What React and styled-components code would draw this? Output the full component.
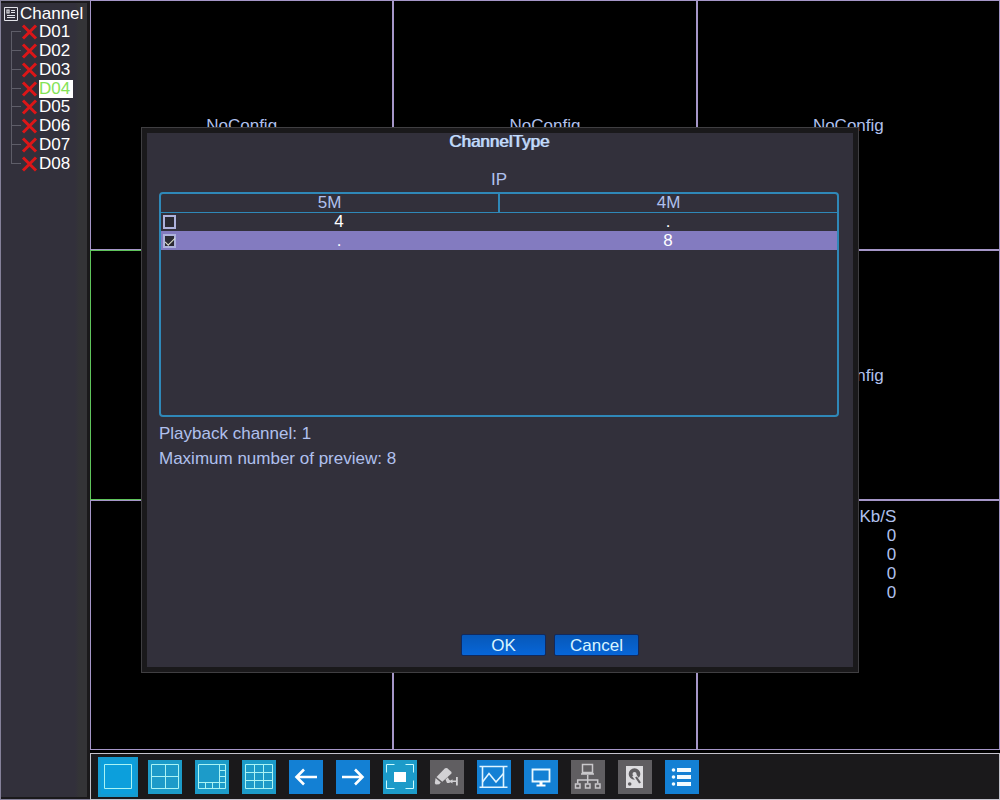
import { useState } from 'react';
import styled, { createGlobalStyle } from 'styled-components';

const GlobalStyle = createGlobalStyle`
  * {
    box-sizing: border-box;
  }

  :root {
    --panel: #32303b;
    --dark: #1a191b;
    --line: #a596c8;
    --text: #b0c0ee;
    --accent: #2f88b8;
  }

  body {
    margin: 0;
    background: #000;
    color: var(--text);
    font-family: 'Liberation Sans', Arial, sans-serif;
    font-size: 17px;
    line-height: 19px;
  }

  button {
    font: inherit;
  }
`;

const Screen = styled.div`
  display: grid;
  grid-template-columns: 90px 1fr;
  height: 100vh;
`;

const Sidebar = styled.aside`
  padding-bottom: 2px;
  border: 1px solid #85819a;
  border-right: 0;
  background: var(--dark);
`;

const SidebarBody = styled.div`
  height: 100%;
  margin-right: 3px;
  padding: 1px 3px;
  border-top: 2px solid var(--dark);
  background: linear-gradient(to right, var(--panel) 74px, #343437 78px);
`;

const SidebarTitle = styled.h1`
  display: flex;
  align-items: center;
  gap: 2px;
  margin: 0;
  color: #fff;
  font-size: 17px;
  font-weight: normal;
`;

const ChannelList = styled.ul`
  display: grid;
  grid-auto-rows: 1fr;
  height: 150px;
  margin: 0;
  padding: 0 0 0 7px;
  list-style: none;
`;

const ChannelItem = styled.li`
  display: flex;
  align-items: center;
`;

const Branch = styled.span`
  display: grid;
  grid-template-rows: 1fr 1fr;
  align-self: stretch;
  width: 10px;

  &::before {
    content: '';
    border-left: ${({ $first }) => ($first ? '0' : '1px solid #5e5d68')};
    border-bottom: 1px solid #5e5d68;
  }

  &::after {
    content: '';
    border-left: ${({ $last }) => ($last ? '0' : '1px solid #5e5d68')};
  }
`;

const ChannelButton = styled.button`
  display: flex;
  align-items: center;
  padding: 0;
  border: 0;
  background: none;
  color: ${({ $selected }) => ($selected ? '#84e356' : '#fff')};
  cursor: pointer;
`;

const ChannelName = styled.span`
  padding-right: 3px;
  background: ${({ $selected }) => ($selected ? '#fff' : 'none')};
  line-height: 18px;
`;

const Main = styled.main`
  display: flex;
  flex-direction: column;
  min-width: 0;
`;

const VideoGrid = styled.div`
  flex: 1;
  display: grid;
  grid-template-columns: repeat(3, 1fr);
  grid-template-rows: repeat(3, 1fr);
`;

const VideoCell = styled.div`
  display: flex;
  align-items: ${({ $top }) => ($top ? 'flex-start' : 'center')};
  justify-content: center;
  border: 1px solid ${({ $selected }) => ($selected ? '#5fc45c' : 'var(--line)')};
`;

const BitrateTable = styled.table`
  width: 96px;
  margin-top: 6px;
  border-collapse: collapse;
  text-align: right;

  th,
  td {
    padding: 0;
    font-weight: normal;
  }
`;

const Toolbar = styled.nav`
  display: flex;
  align-items: center;
  gap: 13px;
  height: 47px;
  margin-top: 3px;
  padding: 0 10px;
  border: 1px solid #c4c2cc;
  background: var(--dark);
`;

const toolColors = {
  cyan: '#1c9bc9',
  blue: '#1380d4',
  gray: '#605e61',
};

const ToolButton = styled.button`
  flex: none;
  display: grid;
  width: 34px;
  height: 34px;
  padding: 0;
  border: 0;
  background: ${({ $tone, $active }) => ($active ? '#0c9fdc' : toolColors[$tone])};
  box-shadow: ${({ $active }) => ($active ? '0 0 0 3px #159bd0' : 'none')};
  cursor: pointer;
`;

const Dialog = styled.section`
  position: fixed;
  inset: 127px 141px;
  display: flex;
  border: 1px solid #403f42;
  background: var(--dark);
  padding: 5px;
`;

const DialogBody = styled.div`
  flex: 1;
  display: flex;
  flex-direction: column;
  padding: 0 14px 11px 12px;
  background: var(--panel);
`;

const DialogTitle = styled.h2`
  margin: 0 0 20px;
  color: #c4dcfa;
  font-size: 17px;
  font-weight: normal;
  line-height: 17px;
  text-align: center;
  text-shadow: 1px 0 #a9c4ec;
`;

const GroupTitle = styled.h3`
  margin: 0 0 3px;
  font-size: 17px;
  font-weight: normal;
  text-align: center;
`;

const TableFrame = styled.div`
  height: 225px;
  margin-bottom: 7px;
  border: 2px solid var(--accent);
  border-radius: 4px;
`;

const TypeTable = styled.table`
  width: 100%;
  border-collapse: collapse;
  table-layout: fixed;
  text-align: center;

  th {
    height: 18px;
    padding: 0;
    border-bottom: 1px solid var(--accent);
    font-weight: normal;
    line-height: 17px;
  }

  th + th {
    border-left: 2px solid var(--accent);
  }

  td {
    height: 19px;
    padding: 0;
    line-height: 17px;
  }
`;

const CheckCol = styled.col`
  width: 18px;
`;

const HalfCol = styled.col`
  width: 50%;
`;

const TypeRow = styled.tr`
  background: ${({ $selected }) => ($selected ? '#837bc0' : 'none')};
  color: #fff;
`;

const CheckBox = styled.input`
  appearance: none;
  display: grid;
  width: 13px;
  height: 14px;
  margin: 0 0 0 2px;
  border: 2px solid #aeb2dc;
  background: #2b2a33;

  &:checked::before {
    content: '';
    width: 9px;
    height: 4px;
    border: solid #dfe3d0;
    border-width: 0 0 1px 1px;
    transform: translate(0, 2px) rotate(-45deg);
  }
`;

const Info = styled.p`
  margin: 0 0 6px;
`;

const Actions = styled.div`
  display: flex;
  justify-content: center;
  gap: 8px;
  margin-top: auto;
  padding-left: 102px;
`;

const ActionButton = styled.button`
  width: 85px;
  height: 22px;
  padding: 0;
  border: 1px solid #12295c;
  border-radius: 2px;
  background: linear-gradient(#0758b8, #0766d8);
  color: #d8f4ff;
  line-height: 19px;
  cursor: pointer;
`;

const ListIcon = () => (
  <svg width="14" height="14" viewBox="0 0 14 14" fill="none" stroke="#e4e4ea" aria-hidden="true">
    <path d="M.5 .5h13v13H.5z" />
    <path d="M3 3h2v3H3zM7 3.5h4M7 5.5h4M3 8.500h8M3 10.500h8" strokeWidth="1.2" />
  </svg>
);

const CrossIcon = () => (
  <svg width="18" height="16" viewBox="0 0 18 16" stroke="#dc1618" strokeWidth="3" aria-hidden="true">
    <path d="M2 1.5L15 14.5M15 1.5L2 14.5" />
  </svg>
);

const ToolIcon = ({ children }) => (
  <svg width="34" height="34" viewBox="0 0 34 34" fill="none" stroke="#a9f3f4" aria-hidden="true">
    {children}
  </svg>
);

const tools = [
  {
    name: 'Single view',
    tone: 'cyan',
    icon: <path d="M3.5 4.5h27v24h-27z" />,
  },
  {
    name: 'Four views',
    tone: 'cyan',
    icon: <path d="M3.5 4.5h27v24h-27zM17.5 4.5v24M3.5 16.5h27" />,
  },
  {
    name: 'Eight views',
    tone: 'cyan',
    icon: <path d="M3.5 4.5h27v24h-27zM24.5 4.5v24M3.5 22.5h27M24.5 10.5h6M24.5 16.5h6M10.5 22.5v6M17.5 22.5v6" />,
  },
  {
    name: 'Nine views',
    tone: 'cyan',
    icon: <path d="M3.5 4.5h27v24h-27zM12.5 4.5v24M21.5 4.5v24M3.5 12.5h27M3.5 20.5h27" />,
  },
  {
    name: 'Previous',
    tone: 'blue',
    icon: <path d="M28 17H8M15 9.5L7.5 17l7.5 7.5" stroke="#fff" strokeWidth="2.6" />,
  },
  {
    name: 'Next',
    tone: 'blue',
    icon: <path d="M6 17h20M19 9.5l7.5 7.5-7.5 7.5" stroke="#fff" strokeWidth="2.6" />,
  },
  {
    name: 'Full screen',
    tone: 'cyan',
    icon: (
      <>
        <path d="M3.5 12.5v-8h8M22.5 4.5h8v8M30.5 20.5v8h-8M11.5 28.5h-8v-8" stroke="#c9fbff" />
        <path d="M11 12h12v10H11z" fill="#fff" stroke="none" />
      </>
    ),
  },
  {
    name: 'PTZ',
    tone: 'gray',
    icon: (
      <g fill="#d2d1d4" stroke="none">
        <path d="M6.5 17L15 8.2l2-.2 4.5 4v1.500L12.300 21.800z" />
        <path d="M5.600 18l5.200 4.600-1.600 1.600-3.400.2-1-1.200z" />
        <path d="M15.500 19.500l2.300-2.300 1.400 2.500 1.300.8 2-1.300v4.300l-2-1.200-1.500.8h-2z" />
        <path d="M22 20.500h4V17h1.800v8.500H26V22h-4z" />
      </g>
    ),
  },
  {
    name: 'Color',
    tone: 'blue',
    icon: (
      <>
        <path d="M2.5 6.5h28M2.5 27.3h28M5.5 7v20M26.5 7v20" stroke="#dff4ff" strokeWidth="1.6" />
        <path d="M5.5 22l6.500-8.500 7 8.500 7.500-8.500" stroke="#dff4ff" strokeWidth="1.600" />
      </>
    ),
  },
  {
    name: 'Output',
    tone: 'blue',
    icon: (
      <>
        <path d="M8.5 9.5h17v12h-17z" stroke="#e8f8ff" strokeWidth="1.8" />
        <path d="M15.500 22h3v2.500h3v2h-9v-2h3z" fill="#fff" stroke="none" />
      </>
    ),
  },
  {
    name: 'Network',
    tone: 'gray',
    icon: (
      <g stroke="#c9c8cb" strokeWidth="1.5">
        <path d="M11.5 4.5h10v8h-10zM10 14h13M16.700 15v8.500M6.700 23.500v-3.500h20v3.500" />
        <path d="M4.500 24h4.500v4H4.500zM14.500 24H19v4h-4.500zM24.500 24H29v4h-4.500z" />
      </g>
    ),
  },
  {
    name: 'Disk manager',
    tone: 'gray',
    icon: (
      <>
        <path d="M8 6h17v22H8z" fill="#dddcdf" stroke="none" />
        <circle cx="16.500" cy="14" r="5.800" fill="#605e61" stroke="none" />
        <circle cx="16.500" cy="14" r="2" fill="#dddcdf" stroke="none" />
        <path d="M16 15l6.500 9" stroke="#dddcdf" strokeWidth="4.500" />
        <path d="M18 17l4 6" stroke="#605e61" strokeWidth="2.200" />
        <circle cx="11.700" cy="24" r="1.800" fill="#605e61" stroke="none" />
      </>
    ),
  },
  {
    name: 'Main menu',
    tone: 'blue',
    icon: (
      <g fill="#f2fbff" stroke="none">
        <path d="M12 8h14v4H12zM12 15h14v4H12zM12 22h14v4H12z" />
        <circle cx="8.5" cy="10" r="1.8" />
        <circle cx="8.5" cy="17" r="1.8" />
        <circle cx="8.5" cy="24" r="1.8" />
      </g>
    ),
  },
];

const channels = ['D01', 'D02', 'D03', 'D04', 'D05', 'D06', 'D07', 'D08'];

const channelTypes = [
  { fiveM: '4', fourM: '.' },
  { fiveM: '.', fourM: '8' },
];

const ChannelTree = ({ selected, onSelect }) => (
  <Sidebar>
    <SidebarBody>
      <SidebarTitle>
        <ListIcon />
        Channel
      </SidebarTitle>
      <ChannelList>
        {channels.map((name, idx) => (
          <ChannelItem key={name}>
            <Branch $first={idx === 0} $last={idx === channels.length - 1} />
            <ChannelButton $selected={name === selected} onClick={() => onSelect(name)}>
              <CrossIcon />
              <ChannelName $selected={name === selected}>{name}</ChannelName>
            </ChannelButton>
          </ChannelItem>
        ))}
      </ChannelList>
    </SidebarBody>
  </Sidebar>
);

const Bitrates = () => (
  <BitrateTable>
    <thead>
      <tr>
        <th scope="col">Kb/S</th>
      </tr>
    </thead>
    <tbody>
      {[0, 0, 0, 0].map((rate, idx) => (
        <tr key={idx}>
          <td>{rate}</td>
        </tr>
      ))}
    </tbody>
  </BitrateTable>
);

const ChannelTypeDialog = ({ onClose }) => {
  const [current, setCurrent] = useState(1);

  return (
    <Dialog role="dialog" aria-labelledby="dialog-title">
      <DialogBody>
        <DialogTitle id="dialog-title">ChannelType</DialogTitle>
        <GroupTitle>IP</GroupTitle>
        <TableFrame>
          <TypeTable>
            <colgroup>
              <CheckCol />
              <col />
              <HalfCol />
            </colgroup>
            <thead>
              <tr>
                <th scope="col" colSpan={2}>5M</th>
                <th scope="col">4M</th>
              </tr>
            </thead>
            <tbody>
              {channelTypes.map(({ fiveM, fourM }, idx) => (
                <TypeRow key={idx} $selected={idx === current}>
                  <td>
                    <CheckBox
                      type="checkbox"
                      aria-label={`5M ${fiveM}, 4M ${fourM}`}
                      checked={idx === current}
                      onChange={() => setCurrent(idx)}
                    />
                  </td>
                  <td>{fiveM}</td>
                  <td>{fourM}</td>
                </TypeRow>
              ))}
            </tbody>
          </TypeTable>
        </TableFrame>
        <Info>Playback channel: 1</Info>
        <Info>Maximum number of preview: 8</Info>
        <Actions>
          <ActionButton onClick={onClose}>OK</ActionButton>
          <ActionButton onClick={onClose}>Cancel</ActionButton>
        </Actions>
      </DialogBody>
    </Dialog>
  );
};

const App = () => {
  const [selected, setSelected] = useState('D04');
  const [view, setView] = useState('Single view');
  const [open, setOpen] = useState(true);

  return (
    <>
      <GlobalStyle />
      <Screen>
        <ChannelTree selected={selected} onSelect={setSelected} />
        <Main>
          <VideoGrid>
            {channels.map((name) => (
              <VideoCell key={name} $selected={name === selected}>
                NoConfig
              </VideoCell>
            ))}
            <VideoCell $top>
              <Bitrates />
            </VideoCell>
          </VideoGrid>
          <Toolbar>
            {tools.map(({ name, tone, icon }) => (
              <ToolButton
                key={name}
                aria-label={name}
                $tone={tone}
                $active={name === view}
                onClick={() => setView(name)}
              >
                <ToolIcon>{icon}</ToolIcon>
              </ToolButton>
            ))}
          </Toolbar>
        </Main>
      </Screen>
      {open && <ChannelTypeDialog onClose={() => setOpen(false)} />}
    </>
  );
};

export default App;
